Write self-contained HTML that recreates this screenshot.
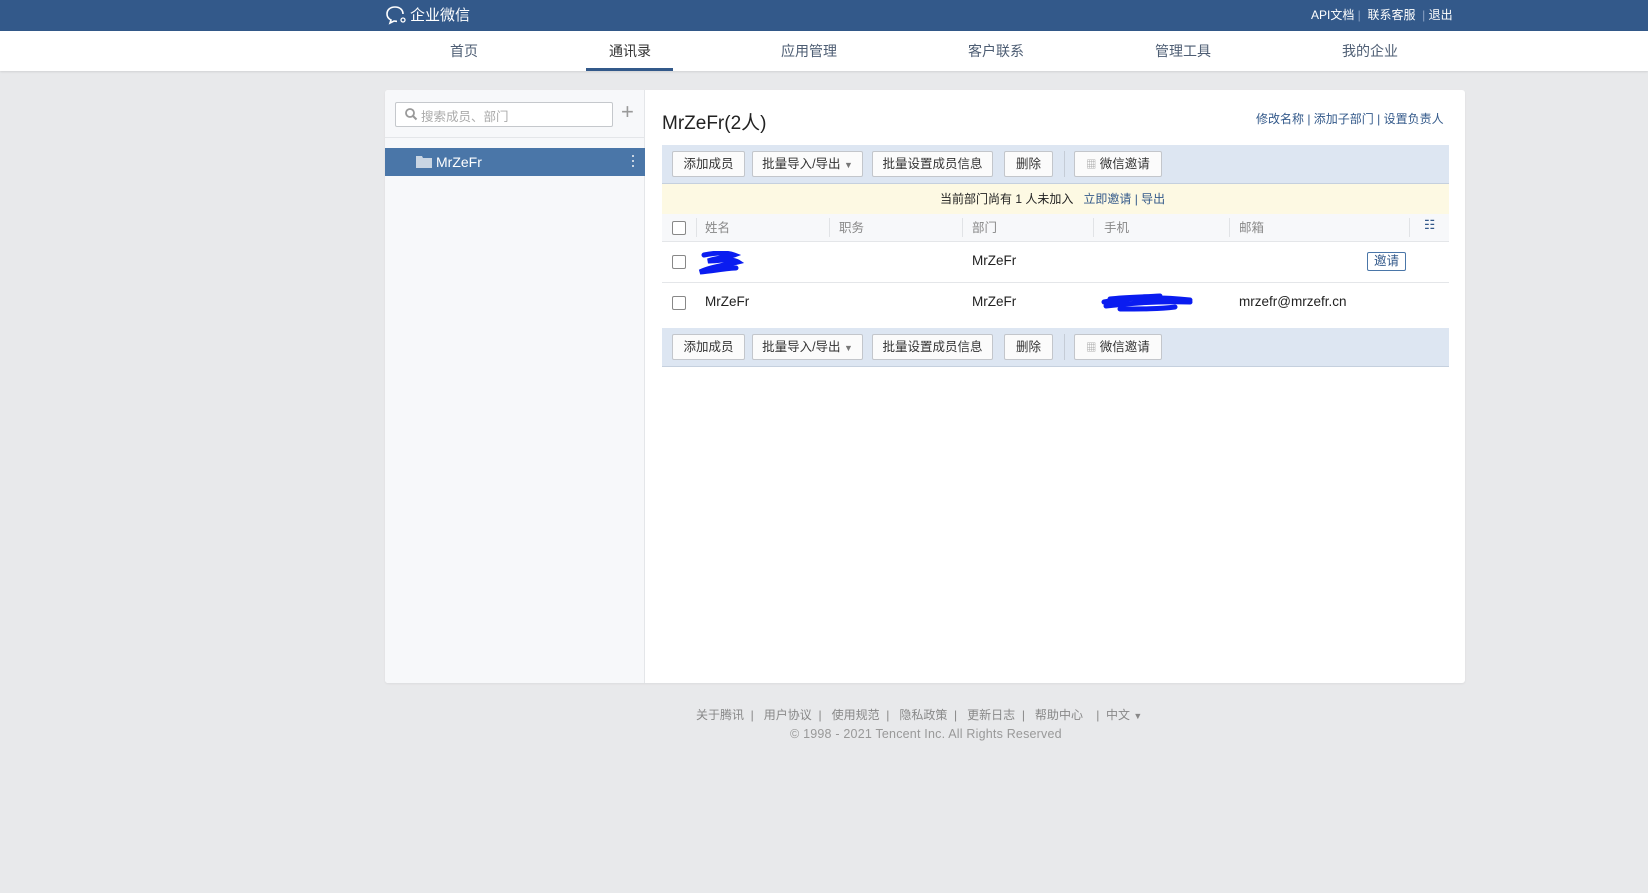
<!DOCTYPE html>
<html><head><meta charset="utf-8"><style>
*{margin:0;padding:0;box-sizing:border-box}
body{width:1648px;height:893px;background:#e8e9eb;font-family:"Liberation Sans","Noto Sans CJK SC",sans-serif;font-size:13px;color:#333;position:relative;overflow:hidden}
.abs{position:absolute}
.top{left:0;top:0;width:1648px;height:31px;background:#33598a}
.nav{left:0;top:31px;width:1648px;height:40px;background:#fff;box-shadow:0 1px 2px rgba(0,0,0,.1)}
.nav span{position:absolute;top:10px;font-size:14px;color:#4d5d73;transform:translateX(-50%)}
.card{left:385px;top:90px;width:1080px;height:593px;background:#fff;border-radius:3px;box-shadow:0 1px 2px rgba(0,0,0,.06)}
.side{left:385px;top:90px;width:260px;height:593px;background:#f7f8fa;border-right:1px solid #e4e6e9;border-radius:3px 0 0 3px}
.tb{left:662px;width:787px;height:39px;background:#dde6f2;border-bottom:1px solid #c5d0de}
.btn{position:absolute;top:6px;height:26px;background:#fbfbfb;border:1px solid #c3c6cb;border-radius:2px;font-size:12.5px;color:#333;text-align:center;line-height:24px}
.th{position:absolute;top:3px;font-size:12.5px;color:#888}
.sep{position:absolute;top:4px;width:1px;height:19px;background:#e1e3e6}
.cb{position:absolute;width:14px;height:14px;border:1px solid #888;border-radius:2px;background:#fff}
.cell{position:absolute;font-size:13.5px;color:#222}
</style></head><body>
<div class="abs top"></div>
<svg class="abs" style="left:385px;top:5px" width="24" height="21" viewBox="0 0 24 21"><path d="M10 2C5 2 2 5 2 9c0 3 2 5 4 6l-1 3 4-2c1 0 2 .3 3 .3" fill="none" stroke="#fff" stroke-width="1.6"/><path d="M10 2c5 0 8 3 8 7" fill="none" stroke="#fff" stroke-width="1.6"/><circle cx="18" cy="15" r="2" fill="none" stroke="#fff" stroke-width="1.3"/></svg>
<div class="abs" style="left:410px;top:4px;color:#fff;font-size:15px">企业微信</div>
<div class="abs" style="left:1311px;top:6px;color:#fff;font-size:12px;white-space:pre">API文档<span style="color:#8aa2c4"> | </span> 联系客服  <span style="color:#8aa2c4">| </span>退出</div>
<div class="abs nav">
<span style="left:464px">首页</span><span style="left:630px;color:#333">通讯录</span><span style="left:809px">应用管理</span><span style="left:996px">客户联系</span><span style="left:1183px">管理工具</span><span style="left:1370px">我的企业</span>
<div class="abs" style="left:586px;top:37px;width:87px;height:3px;background:#33598a"></div>
</div>
<div class="abs card"></div>
<div class="abs side"></div>
<div class="abs" style="left:395px;top:102px;width:218px;height:25px;background:#fff;border:1px solid #c5c8cc;border-radius:2px"></div>
<svg class="abs" style="left:404px;top:107px" width="14" height="14"><circle cx="6" cy="6" r="4" fill="none" stroke="#999" stroke-width="1.8"/><path d="M9 9l3.5 3.5" stroke="#999" stroke-width="2"/></svg>
<div class="abs" style="left:421px;top:106px;font-size:12.5px;color:#aaa">搜索成员、部门</div>
<div class="abs" style="left:621px;top:99px;font-size:22px;color:#999;font-weight:300">+</div>
<div class="abs" style="left:385px;top:137px;width:260px;height:1px;background:#e4e6e9"></div>
<div class="abs" style="left:385px;top:148px;width:260px;height:28px;background:#4a76a8"></div>
<svg class="abs" style="left:416px;top:155px" width="16" height="13"><path d="M0 1h6l1 2h9v10H0z" fill="#c9d5e3"/></svg>
<div class="abs" style="left:436px;top:154px;color:#fff;font-size:14px">MrZeFr</div>
<div class="abs" style="left:632px;top:155px;width:2px;height:14px;background:repeating-linear-gradient(#c9d5e3 0 2px,transparent 2px 5px)"></div>
<div class="abs" style="left:662px;top:108px;font-size:19px;color:#222">MrZeFr(2人)</div>
<div class="abs" style="left:1256px;top:110px;font-size:12px;color:#33598a">修改名称 | 添加子部门 | 设置负责人</div>

<div class="abs tb" style="top:145px">
<div class="btn" style="left:10px;width:73px">添加成员</div>
<div class="btn" style="left:90px;width:111px">批量导入/导出 <span style="font-size:9px;color:#777">▼</span></div>
<div class="btn" style="left:210px;width:121px">批量设置成员信息</div>
<div class="btn" style="left:342px;width:49px">删除</div>
<div class="abs" style="left:402px;top:6px;width:1px;height:26px;background:#c5ccd6"></div>
<div class="btn" style="left:412px;width:88px"><span style="color:#999;font-size:10px">▦</span> 微信邀请</div>
</div>
<div class="abs" style="left:662px;top:184px;width:787px;height:30px;background:#fdf9e3"></div>
<div class="abs" style="left:940px;top:190px;font-size:12px;color:#222">当前部门尚有 1 人未加入 &nbsp; <span style="color:#33598a">立即邀请 | 导出</span></div>
<div class="abs" style="left:662px;top:214px;width:787px;height:28px;background:#f7f8fa;border-bottom:1px solid #e4e6e9">
<div class="cb" style="left:10px;top:7px"></div>
<div class="sep" style="left:34px"></div><div class="th" style="left:43px">姓名</div>
<div class="sep" style="left:167px"></div><div class="th" style="left:177px">职务</div>
<div class="sep" style="left:300px"></div><div class="th" style="left:310px">部门</div>
<div class="sep" style="left:431px"></div><div class="th" style="left:442px">手机</div>
<div class="sep" style="left:567px"></div><div class="th" style="left:577px">邮箱</div>
<div class="sep" style="left:747px"></div><div class="th" style="left:762px;color:#33598a">☷</div>
</div>
<div class="abs" style="left:662px;top:282px;width:787px;height:1px;background:#e4e6e9"></div>
<div class="cb" style="left:672px;top:255px"></div>
<svg class="abs" style="left:690px;top:251px" width="60" height="24"><path d="M14 4c10-2 22-3 30 0-8 3-18 3-26 6 10 0 24-3 30 1-12 3-28 5-38 10 12-1 28-4 36-4" fill="none" stroke="#0a1cf0" stroke-width="5" stroke-linecap="round"/></svg>
<div class="cell" style="left:972px;top:253px">MrZeFr</div>
<div class="abs" style="left:1367px;top:252px;width:39px;height:19px;border:1px solid #4a76a8;border-radius:2px;font-size:12.5px;color:#33598a;text-align:center;line-height:17px;background:#fff">邀请</div>
<div class="cb" style="left:672px;top:296px"></div>
<div class="cell" style="left:705px;top:294px">MrZeFr</div>
<div class="cell" style="left:972px;top:294px">MrZeFr</div>
<svg class="abs" style="left:1100px;top:292px" width="96" height="22"><path d="M4 10c20-4 50-6 86-2M6 14c25-3 55-5 84-4M20 17c20 0 40 0 55-2M10 7c15-2 35-2 50-3" fill="none" stroke="#0a1cf0" stroke-width="5" stroke-linecap="round"/></svg>
<div class="cell" style="left:1239px;top:294px">mrzefr@mrzefr.cn</div>

<div class="abs tb" style="top:328px">
<div class="btn" style="left:10px;width:73px">添加成员</div>
<div class="btn" style="left:90px;width:111px">批量导入/导出 <span style="font-size:9px;color:#777">▼</span></div>
<div class="btn" style="left:210px;width:121px">批量设置成员信息</div>
<div class="btn" style="left:342px;width:49px">删除</div>
<div class="abs" style="left:402px;top:6px;width:1px;height:26px;background:#c5ccd6"></div>
<div class="btn" style="left:412px;width:88px"><span style="color:#999;font-size:10px">▦</span> 微信邀请</div>
</div>

<div class="abs" style="left:696px;top:706px;font-size:12px;color:#888;white-space:pre">关于腾讯  |   用户协议  |   使用规范  |   隐私政策  |   更新日志  |   帮助中心    |  中文 <span style="font-size:9px">▼</span></div>
<div class="abs" style="left:790px;top:727px;font-size:12.5px;color:#999;letter-spacing:0.2px">© 1998 - 2021 Tencent Inc. All Rights Reserved</div>
</body></html>
